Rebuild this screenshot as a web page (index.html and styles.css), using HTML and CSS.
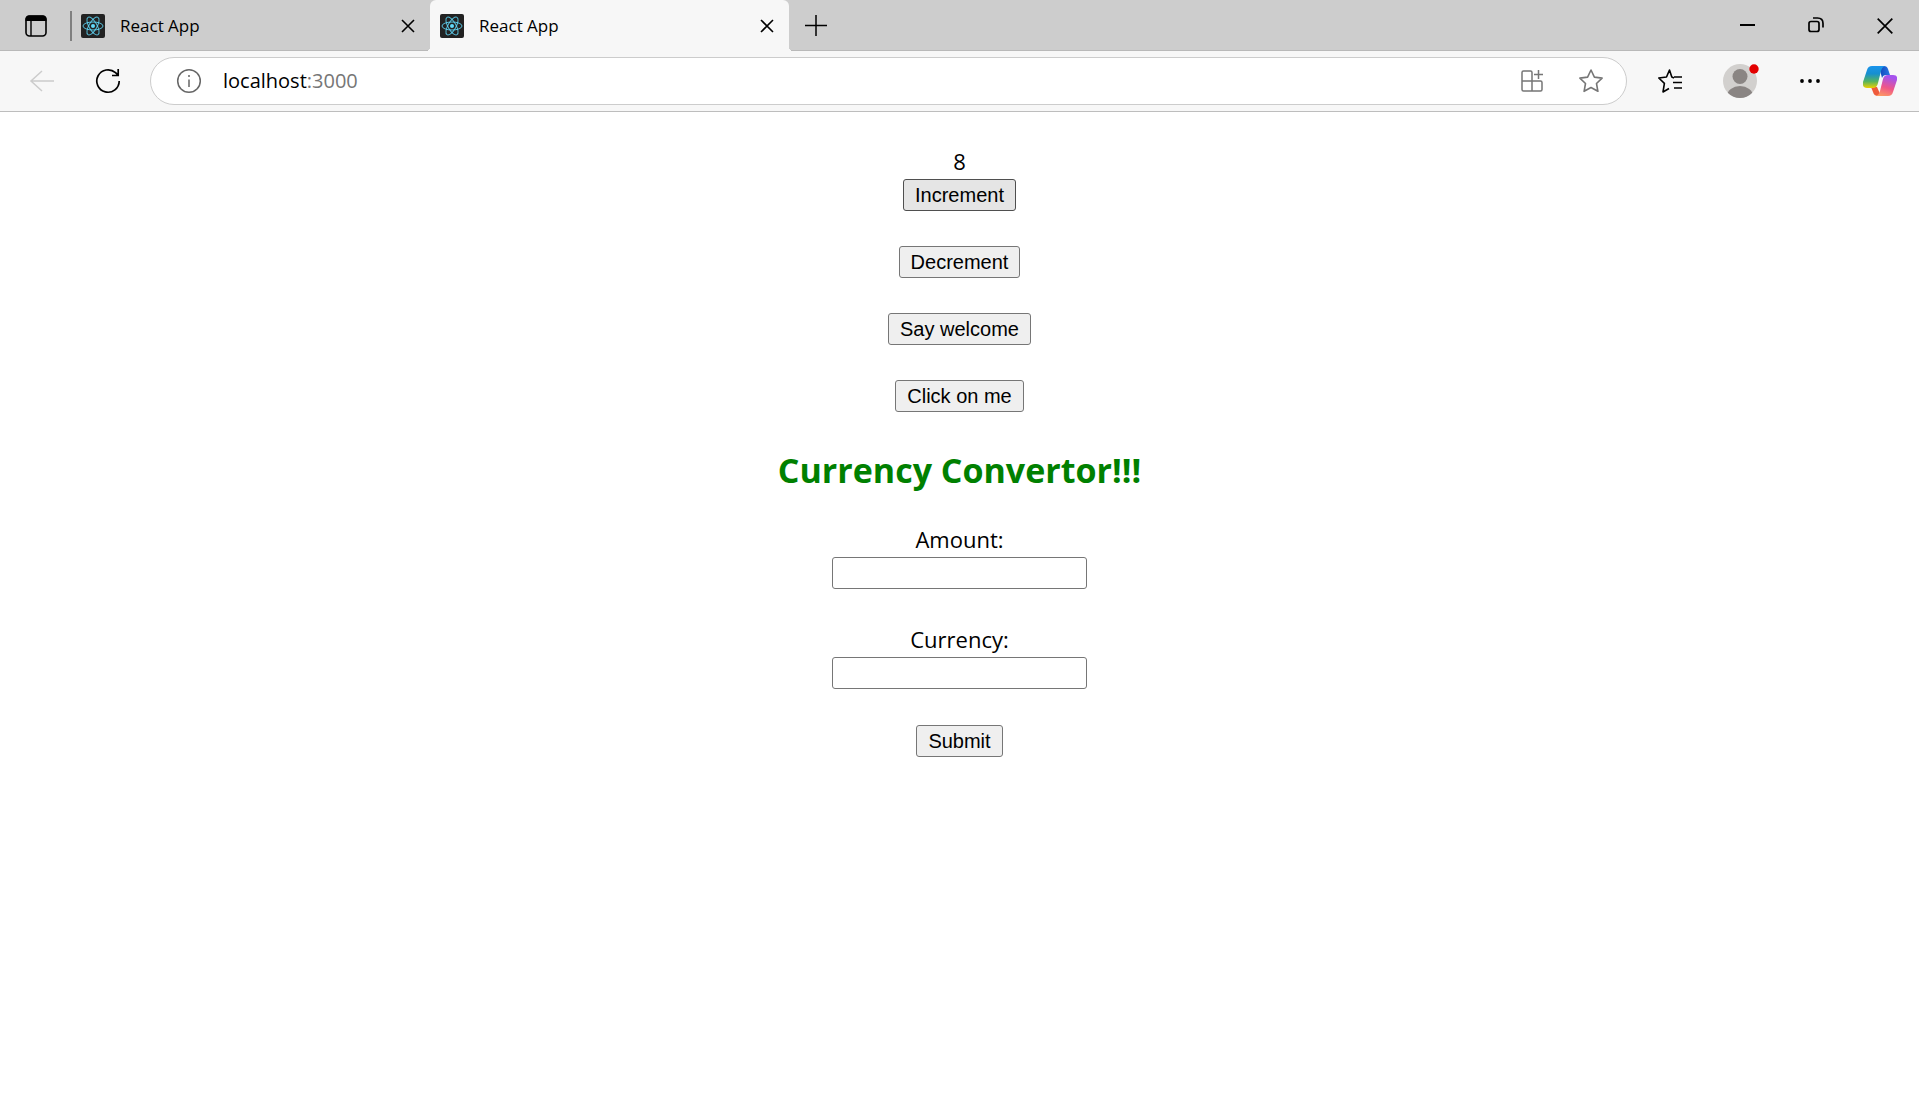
FILE: index.html
```html
<!DOCTYPE html>
<html lang="en">
<head>
<meta charset="utf-8">
<title>React App</title>
<link rel="stylesheet" href="styles.css">
</head>
<body>
<svg class="symbols" aria-hidden="true">
  <symbol id="react" viewBox="0 0 24 24">
    <rect width="24" height="24" rx="2" fill="#222"/>
    <g fill="none" stroke="#61dafb" stroke-opacity=".85">
      <ellipse cx="12" cy="12" rx="10" ry="4"/>
      <ellipse cx="12" cy="12" rx="10" ry="4" transform="rotate(60 12 12)"/>
      <ellipse cx="12" cy="12" rx="10" ry="4" transform="rotate(120 12 12)"/>
    </g>
    <circle cx="12" cy="12" r="2" fill="#61dafb"/>
  </symbol>
  <symbol id="cross" viewBox="0 0 16 16">
    <path d="M2 2l12 12M14 2L2 14" fill="none" stroke="#000" stroke-width="1.6"/>
  </symbol>
</svg>

<header class="browser">
  <div class="tabstrip">
    <button class="icon-btn tab-menu" aria-label="Tab actions">
      <svg width="24" height="24" viewBox="0 0 24 24"><rect x="2" y="2" width="20" height="20" rx="3.5" fill="none" stroke="#000" stroke-width="1.6"/><path d="M1.5 7V5Q1.5 1.5 5 1.5h14q3.500 0 3.500 3.500v2z"/><path d="M7 7v15" stroke="#000" stroke-width="1.4"/></svg>
    </button>
    <div class="tab">
      <svg width="24" height="24"><use href="#react"/></svg>
      <span class="tab-title">React App</span>
      <button class="icon-btn" aria-label="Close tab"><svg width="16" height="16"><use href="#cross"/></svg></button>
    </div>
    <div class="tab tab-active">
      <svg width="24" height="24"><use href="#react"/></svg>
      <span class="tab-title">React App</span>
      <button class="icon-btn" aria-label="Close tab"><svg width="16" height="16"><use href="#cross"/></svg></button>
    </div>
    <button class="icon-btn new-tab" aria-label="New tab">
      <svg width="22" height="22" viewBox="0 0 22 22"><path d="M11 0v21M0 10.500h22" stroke="#000" stroke-width="1.5"/></svg>
    </button>
    <div class="window-controls">
      <button class="icon-btn" aria-label="Minimize"><svg width="16" height="16" viewBox="0 0 16 16"><path d="M0 8h15" stroke="#000" stroke-width="2"/></svg></button>
      <button class="icon-btn" aria-label="Restore"><svg width="16" height="16" viewBox="0 0 16 16" fill="none" stroke="#000" stroke-width="1.7"><rect x="1" y="4.500" width="10" height="10" rx="2"/><path d="M5 1h4.500Q15 1 15 6.500V10.500"/></svg></button>
      <button class="icon-btn" aria-label="Close"><svg width="18" height="18" viewBox="0 0 16 16"><path d="M1.500 1.500l13 13M14.500 1.500l-13 13" stroke="#000" stroke-width="1.5"/></svg></button>
    </div>
  </div>

  <div class="toolbar">
    <button class="icon-btn back" aria-label="Back"><svg width="26" height="24" viewBox="0 0 26 24"><path d="M25 12H2M13 2L2 12l11 10" fill="none" stroke="#ccc" stroke-width="1.5"/></svg></button>
    <button class="icon-btn reload" aria-label="Refresh"><svg width="26" height="26" viewBox="0 0 26 26"><path d="M24.200 13A11.200 11.200 0 1 1 20.500 4.700L23 7M23.200 1v6.500H17" fill="none" stroke="#000" stroke-width="1.7"/></svg></button>
    <div class="address">
      <svg width="26" height="26" viewBox="0 0 26 26"><circle cx="13" cy="13" r="11.300" fill="none" stroke="#666" stroke-width="1.500"/><path d="M13 11.500v7.500M13 7v2" stroke="#666" stroke-width="1.500"/></svg>
      <a class="url" href="http://localhost:3000">localhost<span class="port">:3000</span></a>
      <div class="address-actions">
        <button class="icon-btn" aria-label="Apps"><svg width="24" height="24" viewBox="0 0 24 24" fill="none" stroke="#767676" stroke-width="1.500"><path d="M12 22V3.500Q12 2 10.500 2H3.500Q2 2 2 3.500V20.500Q2 22 3.500 22H20.500Q22 22 22 20.500V13.500Q22 12 20.500 12H2M18.500 1v9M14 5.500h9"/></svg></button>
        <button class="icon-btn" aria-label="Add to favorites"><svg width="26" height="26" viewBox="0 0 26 26"><path d="M13 2l3.400 7.100 7.700 1-5.600 5.400 1.400 7.800-6.900-3.800-6.900 3.800 1.400-7.800-5.600-5.400 7.700-1z" fill="none" stroke="#767676" stroke-width="1.600" stroke-linejoin="round"/></svg></button>
      </div>
    </div>
    <div class="tools">
      <button class="icon-btn" aria-label="Favorites"><svg width="26" height="26" viewBox="0 0 26 26"><path d="M17 10l-2.200-1L12.500 2 9.500 9l-7.700 1 5.600 5.400L6 24l6-3.500M17 9h8M16 14.500h9M17 20h8" fill="none" stroke="#000" stroke-width="1.600" stroke-linejoin="round"/></svg></button>
      <button class="icon-btn" aria-label="Profile"><svg width="36" height="38" viewBox="2 0 36 38"><defs><clipPath id="face"><circle cx="19" cy="19" r="17"/></clipPath></defs><circle cx="19" cy="19" r="17" fill="#d2d0ce"/><g clip-path="url(#face)" fill="#8a8583"><circle cx="19" cy="14.500" r="7.500"/><ellipse cx="19" cy="34" rx="13" ry="10"/></g><circle cx="33" cy="7" r="4.700" fill="#e30000"/></svg></button>
      <button class="icon-btn" aria-label="Settings and more"><svg width="24" height="6" viewBox="0 0 24 6"><circle cx="3" cy="3" r="1.900"/><circle cx="11" cy="3" r="1.900"/><circle cx="19" cy="3" r="1.900"/></svg></button>
      <button class="icon-btn" aria-label="Copilot"><svg width="34" height="32" viewBox="0 0 34 32">
        <defs>
          <linearGradient id="cool" x1="0" y1="0" x2="0" y2="1"><stop offset="0" stop-color="#1a94ec"/><stop offset=".35" stop-color="#168fd0"/><stop offset=".7" stop-color="#55b45f"/><stop offset="1" stop-color="#eed000"/></linearGradient>
          <linearGradient id="warm" x1=".3" y1="0" x2="0" y2="1"><stop offset="0" stop-color="#a653ed"/><stop offset=".5" stop-color="#ef5688"/><stop offset="1" stop-color="#ffa35d"/></linearGradient>
          <linearGradient id="navy"><stop offset="0" stop-color="#1042b8"/><stop offset="1" stop-color="#2777e4"/></linearGradient>
        </defs>
        <path d="M16 1h5q3 0 4 3l2 6h-4q-3 0-4 3z" fill="url(#navy)"/>
        <path d="M8 22h6l4 9h-3q-4 0-5-4z" fill="#ef5b3c"/>
        <path d="M9 1h13q-3 1-4 5l-3 12q-1 5-5 5H4q-5 0-4-6L4 5q1-4 5-4z" fill="url(#cool)"/>
        <path d="M25 31H13q3-1 4-5l3-12q1-4 5-4h5q5 0 4 5l-4 12q-1 4-5 4z" fill="url(#warm)"/>
      </svg></button>
    </div>
  </div>
</header>

<main class="app">
  <section class="counter">
    <div class="stack">
      <output class="count">8</output>
      <button class="btn btn-hover">Increment</button>
    </div>
    <button class="btn">Decrement</button>
    <button class="btn">Say welcome</button>
    <button class="btn">Click on me</button>
  </section>
  <h1 class="heading">Currency Convertor!!!</h1>
  <form class="convertor">
    <div class="stack">
      <label for="amount">Amount:</label>
      <input class="field" id="amount" type="text">
    </div>
    <div class="stack">
      <label for="currency">Currency:</label>
      <input class="field" id="currency" type="text">
    </div>
    <button class="btn" type="submit">Submit</button>
  </form>
</main>
</body>
</html>
```
FILE: styles.css
```css
* { box-sizing: border-box; }

body {
  margin: 0;
  background: #fff;
  color: #000;
  font-family: "Open Sans", "Noto Sans", sans-serif;
}

svg { display: block; flex: none; }

.symbols { position: absolute; width: 0; height: 0; }

.icon-btn {
  display: flex;
  padding: 0;
  border: 0;
  background: none;
}

/* Tab strip */
.tabstrip {
  display: flex;
  align-items: center;
  height: 51px;
  background: #cdcdcd;
  box-shadow: inset 0 -1px #b9b9b9;
}

.tab-menu {
  align-items: center;
  height: 30px;
  width: 72px;
  padding-left: 24px;
  border-right: 2px solid #808080;
}

.tab {
  display: flex;
  align-items: center;
  gap: 15px;
  width: 358px;
  height: 51px;
  padding: 0 14px 0 9px;
}

.tab-active {
  position: relative;
  width: 359px;
  padding-left: 10px;
  background: #f7f7f7;
  border-radius: 6px 6px 0 0;
}

/* Flared feet where the active tab meets the toolbar */
.tab-active::before,
.tab-active::after {
  content: "";
  position: absolute;
  bottom: 0;
  width: 4px;
  height: 4px;
}

.tab-active::before {
  right: 100%;
  background: radial-gradient(circle at 0 0, transparent 4px, #f7f7f7 4px);
}

.tab-active::after {
  left: 100%;
  background: radial-gradient(circle at 100% 0, transparent 4px, #f7f7f7 4px);
}

.tab-title {
  flex: 1;
  font-size: 17px;
  line-height: 24px;
}

.new-tab { margin-left: 16px; }

.window-controls {
  display: flex;
  gap: 52px;
  margin-left: auto;
  padding-right: 25px;
}

/* Toolbar */
.toolbar {
  display: flex;
  align-items: center;
  height: 61px;
  background: #f7f7f7;
  border-bottom: 1px solid #bdbdbd;
}

.back { margin-left: 29px; }
.reload { margin: 0 29px 0 40px; }

.address {
  display: flex;
  flex: 1;
  align-items: center;
  gap: 21px;
  height: 48px;
  padding: 0 22px 0 25px;
  background: #fff;
  border: 1px solid #ccc;
  border-radius: 24px;
}

.url {
  flex: 1;
  color: #000;
  font-size: 20px;
  line-height: 28px;
  text-decoration: none;
}

.address-actions {
  display: flex;
  align-items: center;
  gap: 34px;
}

.port { color: #767676; }

.tools {
  display: flex;
  align-items: center;
  gap: 40px;
  padding: 0 22px 0 30px;
}

/* Page */
.app {
  display: flex;
  flex-direction: column;
  align-items: center;
  padding: 35px 12px;
  font-size: 22px;
  line-height: 28px;
}

.counter,
.convertor {
  display: flex;
  flex-direction: column;
  align-items: center;
  gap: 35px;
}

.convertor { gap: 36px; }

.stack {
  display: flex;
  flex-direction: column;
  align-items: center;
  gap: 4px;
}

.btn {
  height: 32px;
  padding: 0 11px;
  background: #efefef;
  border: 1px solid #767676;
  border-radius: 3px;
  color: #000;
  font: 20px/28px "Liberation Sans", Arial, sans-serif;
}

.btn-hover {
  background: #e5e5e5;
  border-color: #4f4f4f;
}

.heading {
  margin: 34px 0 31px;
  color: #008000;
  font-size: 34px;
  line-height: 48px;
}

.field {
  width: 255px;
  height: 32px;
  padding: 0 4px;
  background: #fff;
  border: 1px solid #767676;
  border-radius: 3px;
  font: 20px "Liberation Sans", Arial, sans-serif;
}
```
